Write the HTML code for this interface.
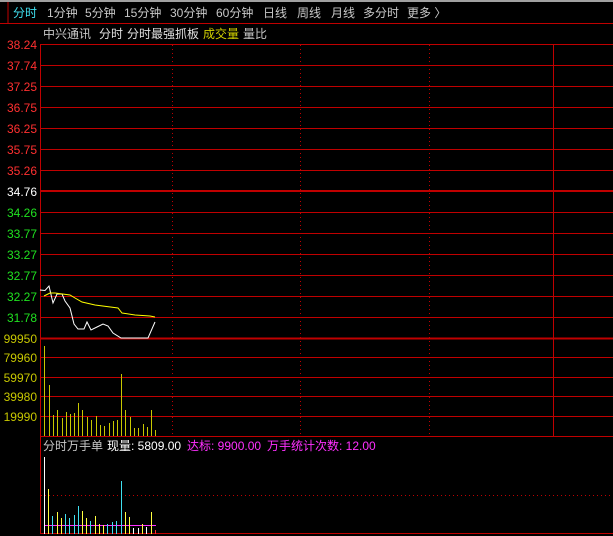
<!DOCTYPE html>
<html><head><meta charset="utf-8"><style>
html,body{margin:0;padding:0;background:#000;width:613px;height:536px;overflow:hidden}
svg{display:block}
text{font-family:"Liberation Sans","Noto Sans CJK SC",sans-serif;font-size:12px}
</style></head><body>
<svg width="613" height="536" xmlns="http://www.w3.org/2000/svg">
<rect width="613" height="536" fill="#000"/>
<line x1="0" y1="1" x2="613" y2="1" stroke="#a0a0a0" stroke-width="2"/>
<line x1="8" y1="2" x2="8" y2="23" stroke="#c00000"/>
<line x1="0" y1="23.5" x2="613" y2="23.5" stroke="#c00000"/>
<g fill="#c8c8c8">
<text x="13" y="17" fill="#40e0f0">分时</text>
<text x="47" y="17">1分钟</text>
<text x="85" y="17">5分钟</text>
<text x="124" y="17">15分钟</text>
<text x="170" y="17">30分钟</text>
<text x="216" y="17">60分钟</text>
<text x="263" y="17">日线</text>
<text x="297" y="17">周线</text>
<text x="331" y="17">月线</text>
<text x="363" y="17">多分时</text>
<text x="407" y="17">更多 〉</text>
</g>
<g>
<text x="43" y="38" fill="#c8c8c8">中兴通讯</text>
<text x="99" y="38" fill="#e0e0e0">分时</text>
<text x="127" y="38" fill="#e0e0e0">分时最强抓板</text>
<text x="203" y="38" fill="#d0d000">成交量</text>
<text x="243" y="38" fill="#c8c8c8">量比</text>
</g>
<g stroke="#c00000" stroke-width="1">
<rect x="40.5" y="44.5" width="580" height="489" fill="none"/>
<line x1="40" y1="65.5" x2="613" y2="65.5"/><line x1="40" y1="86.5" x2="613" y2="86.5"/>
<line x1="40" y1="107.5" x2="613" y2="107.5"/><line x1="40" y1="128.5" x2="613" y2="128.5"/>
<line x1="40" y1="149.5" x2="613" y2="149.5"/><line x1="40" y1="170.5" x2="613" y2="170.5"/>
<line x1="40" y1="191" x2="613" y2="191" stroke-width="2"/>
<line x1="40" y1="212.5" x2="613" y2="212.5"/><line x1="40" y1="233.5" x2="613" y2="233.5"/>
<line x1="40" y1="254.5" x2="613" y2="254.5"/><line x1="40" y1="275.5" x2="613" y2="275.5"/>
<line x1="40" y1="296.5" x2="613" y2="296.5"/><line x1="40" y1="317.5" x2="613" y2="317.5"/>
<line x1="40" y1="338.5" x2="613" y2="338.5" stroke-width="2"/>
<line x1="40" y1="357.5" x2="613" y2="357.5"/><line x1="40" y1="377.5" x2="613" y2="377.5"/>
<line x1="40" y1="396.5" x2="613" y2="396.5"/><line x1="40" y1="416.5" x2="613" y2="416.5"/>
<line x1="40" y1="436.5" x2="613" y2="436.5"/>
<line x1="553.5" y1="44" x2="553.5" y2="436"/>
</g>
<g stroke="#c00000" stroke-dasharray="1,3">
<line x1="172.5" y1="45" x2="172.5" y2="436"/><line x1="300.5" y1="45" x2="300.5" y2="436"/><line x1="429.5" y1="45" x2="429.5" y2="436"/>
<line x1="41" y1="495.5" x2="613" y2="495.5"/>
</g>
<g font-size="12" text-anchor="end">
<g fill="#ff3030">
<text x="37" y="49">38.24</text><text x="37" y="70">37.74</text><text x="37" y="91">37.25</text>
<text x="37" y="112">36.75</text><text x="37" y="133">36.25</text><text x="37" y="154">35.75</text><text x="37" y="175">35.26</text>
</g>
<text x="37" y="196" fill="#fff">34.76</text>
<g fill="#20e020">
<text x="37" y="217">34.26</text><text x="37" y="238">33.77</text><text x="37" y="259">33.27</text>
<text x="37" y="280">32.77</text><text x="37" y="301">32.27</text><text x="37" y="322">31.78</text>
</g>
<g fill="#c8c800">
<text x="37" y="343">99950</text><text x="37" y="362">79960</text><text x="37" y="382">59970</text>
<text x="37" y="401">39980</text><text x="37" y="421">19990</text>
</g>
</g>
<polyline fill="none" stroke="#fff" stroke-width="1" points="40,290 45,290.5 49,286 53,303 57,294 62,294 65,301 70,308 74,324 78,329 84,329 87,322 91,330 97,327 103,324 108,326 113,333 121,338 148,338 155,322"/>
<polyline fill="none" stroke="#ffff00" stroke-width="1" points="44,296 50,293 55,293 70,295 75,298 82,302 95,305 118,308 122,313 135,315 150,316 155,317"/>
<g stroke="#c8c800" stroke-width="1">
<line x1="44.5" y1="346" x2="44.5" y2="436"/><line x1="49.5" y1="385" x2="49.5" y2="436"/>
<line x1="53.5" y1="415" x2="53.5" y2="436"/><line x1="57.5" y1="410" x2="57.5" y2="436"/>
<line x1="62.5" y1="418" x2="62.5" y2="436"/><line x1="66.5" y1="412" x2="66.5" y2="436"/>
<line x1="70.5" y1="414" x2="70.5" y2="436"/><line x1="74.5" y1="413" x2="74.5" y2="436"/>
<line x1="78.5" y1="403" x2="78.5" y2="436"/><line x1="82.5" y1="410" x2="82.5" y2="436"/>
<line x1="87.5" y1="417" x2="87.5" y2="436"/><line x1="91.5" y1="420" x2="91.5" y2="436"/>
<line x1="96.5" y1="416" x2="96.5" y2="436"/><line x1="100.5" y1="425" x2="100.5" y2="436"/>
<line x1="104.5" y1="426" x2="104.5" y2="436"/><line x1="109.5" y1="423" x2="109.5" y2="436"/>
<line x1="113.5" y1="421" x2="113.5" y2="436"/><line x1="117.5" y1="420" x2="117.5" y2="436"/>
<line x1="121.5" y1="374" x2="121.5" y2="436"/><line x1="125.5" y1="410" x2="125.5" y2="436"/>
<line x1="130.5" y1="417" x2="130.5" y2="436"/><line x1="134.5" y1="428" x2="134.5" y2="436"/>
<line x1="138.5" y1="428" x2="138.5" y2="436"/><line x1="143.5" y1="424" x2="143.5" y2="436"/>
<line x1="147.5" y1="427" x2="147.5" y2="436"/><line x1="151.5" y1="410" x2="151.5" y2="436"/>
<line x1="155.5" y1="430" x2="155.5" y2="436"/>
</g>
<text x="43" y="450" fill="#c8c8c8">分时万手单</text>
<text x="107" y="450" fill="#fff">现量: 5809.00</text>
<text x="187" y="450" fill="#ff30ff">达标: 9900.00</text>
<text x="267" y="450" fill="#ff30ff">万手统计次数: 12.00</text>
<line x1="44" y1="525.5" x2="156" y2="525.5" stroke="#ff30ff"/>
<g stroke-width="1">
<line x1="44.5" y1="457" x2="44.5" y2="534" stroke="#fff"/>
<line x1="48.5" y1="489" x2="48.5" y2="534" stroke="#ffff40"/>
<line x1="52.5" y1="516" x2="52.5" y2="534" stroke="#40e0f0"/>
<line x1="57.5" y1="512" x2="57.5" y2="534" stroke="#ffff40"/>
<line x1="61.5" y1="518" x2="61.5" y2="534" stroke="#ffff40"/>
<line x1="65.5" y1="514" x2="65.5" y2="534" stroke="#40e0f0"/>
<line x1="69.5" y1="518" x2="69.5" y2="534" stroke="#40e0f0"/>
<line x1="74.5" y1="515" x2="74.5" y2="534" stroke="#40e0f0"/>
<line x1="78.5" y1="506" x2="78.5" y2="534" stroke="#40e0f0"/>
<line x1="82.5" y1="511" x2="82.5" y2="534" stroke="#ffff40"/>
<line x1="86.5" y1="518" x2="86.5" y2="534" stroke="#ffff40"/>
<line x1="90.5" y1="521" x2="90.5" y2="534" stroke="#40e0f0"/>
<line x1="95.5" y1="516" x2="95.5" y2="534" stroke="#ffff40"/>
<line x1="99.5" y1="524" x2="99.5" y2="534" stroke="#ffff40"/>
<line x1="103.5" y1="525" x2="103.5" y2="534" stroke="#ffff40"/>
<line x1="107.5" y1="524" x2="107.5" y2="534" stroke="#40e0f0"/>
<line x1="112.5" y1="522" x2="112.5" y2="534" stroke="#40e0f0"/>
<line x1="116.5" y1="521" x2="116.5" y2="534" stroke="#40e0f0"/>
<line x1="121.5" y1="481" x2="121.5" y2="534" stroke="#40e0f0"/>
<line x1="125.5" y1="512" x2="125.5" y2="534" stroke="#ffff40"/>
<line x1="129.5" y1="517" x2="129.5" y2="534" stroke="#ffff40"/>
<line x1="133.5" y1="528" x2="133.5" y2="534" stroke="#fff"/>
<line x1="138.5" y1="528" x2="138.5" y2="534" stroke="#fff"/>
<line x1="142.5" y1="524" x2="142.5" y2="534" stroke="#ffff40"/>
<line x1="146.5" y1="527" x2="146.5" y2="534" stroke="#fff"/>
<line x1="151.5" y1="512" x2="151.5" y2="534" stroke="#ffff40"/>
<line x1="155.5" y1="530" x2="155.5" y2="534" stroke="#ff3030"/>
</g>
</svg>
</body></html>
